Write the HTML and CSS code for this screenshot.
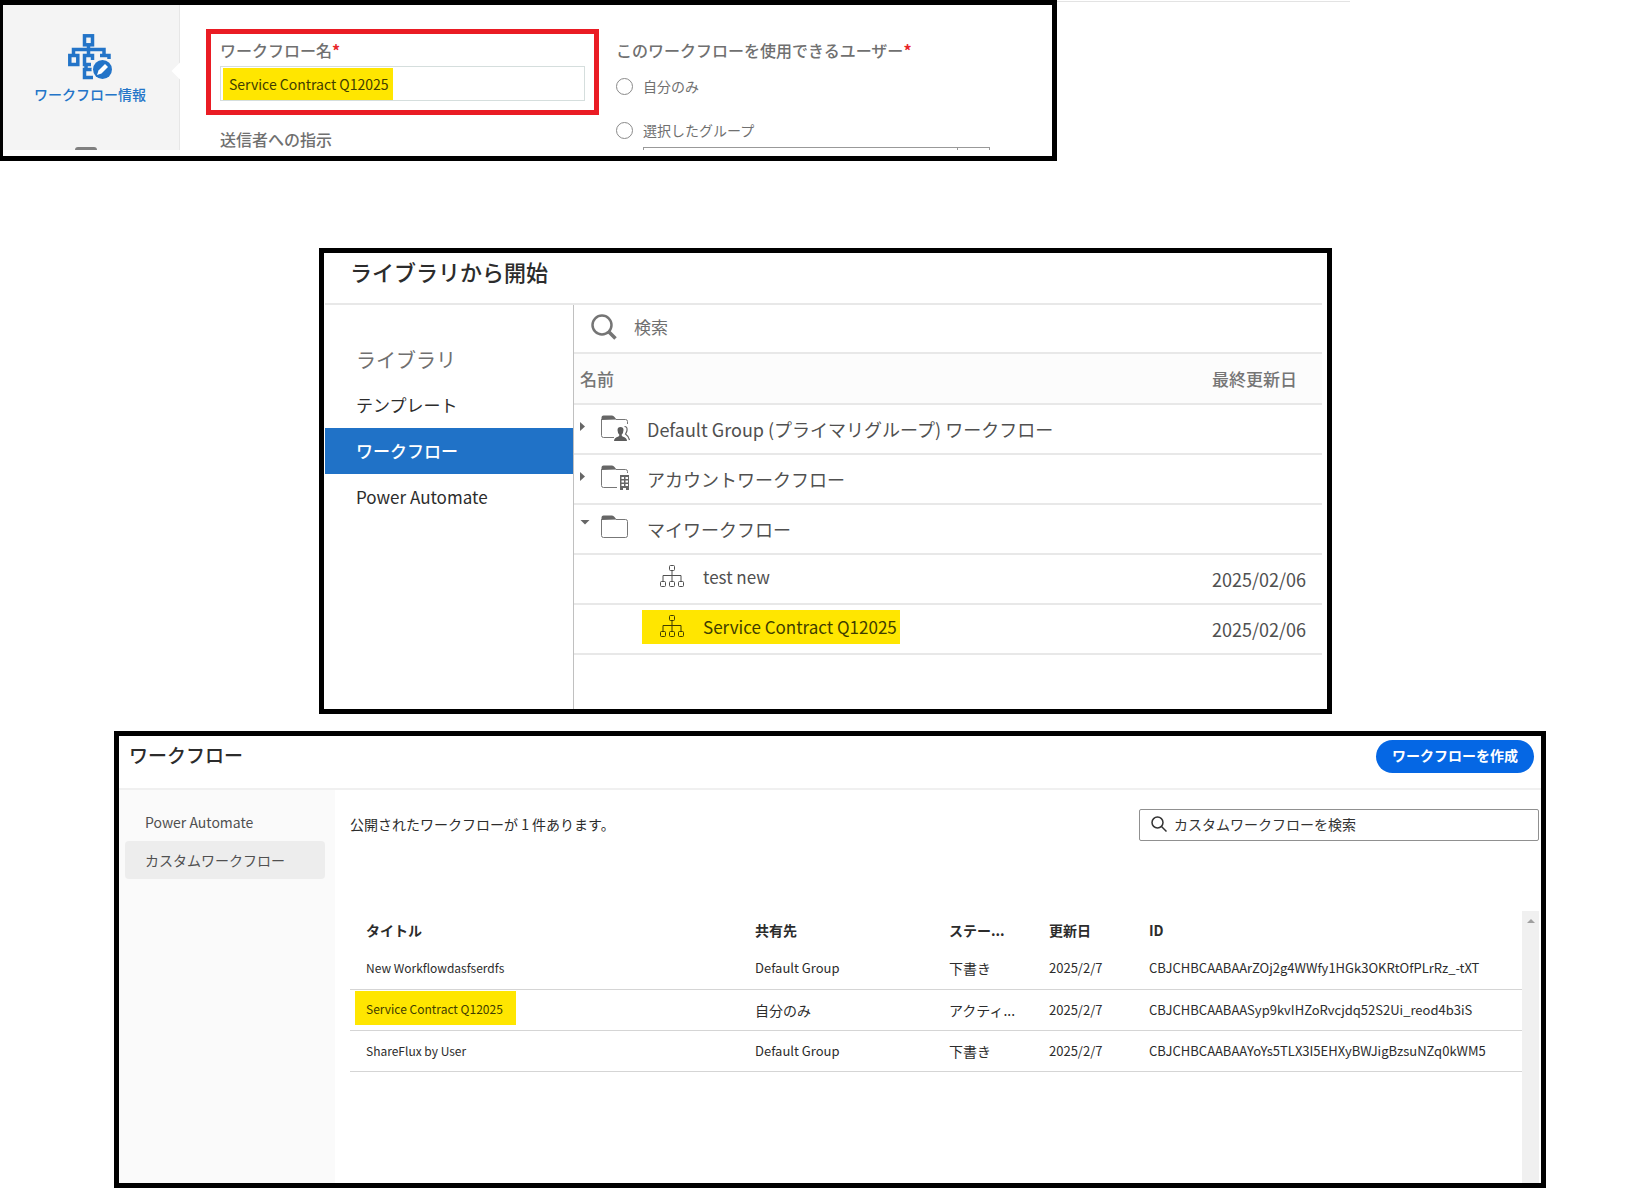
FILE: index.html
```html
<!DOCTYPE html>
<html lang="ja">
<head>
<meta charset="utf-8">
<meta name="viewport" content="width=device-width, initial-scale=1">
<title>ワークフロー</title>
<link rel="stylesheet" href="styles.css">
</head>
<body>
<svg class="defs" aria-hidden="true">
  <symbol id="tree" viewBox="0 0 24 24">
    <g fill="none" stroke="currentColor" stroke-width="1">
      <rect x="9.5" y="0.5" width="5" height="5" rx="1"/>
      <rect x="0.5" y="16.5" width="5" height="5" rx="1"/>
      <rect x="9.5" y="16.5" width="5" height="5" rx="1"/>
      <rect x="18.500" y="16.5" width="5" height="5" rx="1"/>
      <path d="M12 6v10M3 16v-5.500h18V16"/>
    </g>
  </symbol>
  <symbol id="folder-base" viewBox="0 0 30 28">
    <path d="M0.500 5V2.500q0-2 2-2H11q1.500 0 2.500 1.500l2 2.500z" fill="#666"/>
  </symbol>
</svg>

<section class="panel info">
  <div class="info-body">
    <nav class="steps">
      <a class="step" href="#info">
        <svg width="45" height="46" viewBox="0 0 45 46" aria-hidden="true">
          <g fill="none" stroke="#2374c8" stroke-width="3.500">
            <rect x="16.500" y="1.800" width="8" height="9"/>
            <rect x="1.800" y="21.500" width="8" height="9"/>
            <path d="M20.500 11v10M5.500 21v-5.500H36V21M23 30.500h-6.500v-9h8V26M32 21.500h9V25M18 30v6M25 35.500h-8.500v8H25"/>
          </g>
          <circle cx="34.500" cy="35.500" r="11" fill="#f4f4f4"/>
          <circle cx="34.500" cy="35.500" r="9.500" fill="#2374c8"/>
          <path d="M29 41l1.500-4.500 6.500-6.500 3 3-6.500 6.500z" fill="#fff"/>
        </svg>
        <span>ワークフロー情報</span>
      </a>
      <span class="next-step"></span>
    </nav>
    <form class="fields">
      <div class="column">
        <div class="required-box">
          <label class="label" for="name">ワークフロー名<b>*</b></label>
          <input id="name" class="name-input" type="text" value="Service Contract Q12025">
        </div>
        <p class="label instructions">送信者への指示</p>
      </div>
      <fieldset class="users">
        <legend class="label">このワークフローを使用できるユーザー<b>*</b></legend>
        <label class="choice"><input type="radio" name="who">自分のみ</label>
        <label class="choice"><input type="radio" name="who">選択したグループ</label>
        <span class="group-picker"></span>
      </fieldset>
    </form>
  </div>
</section>

<section class="panel library">
  <h1 class="library-title">ライブラリから開始</h1>
  <div class="library-body">
    <nav class="library-nav">
      <h2>ライブラリ</h2>
      <a href="#templates">テンプレート</a>
      <a class="current" href="#workflows">ワークフロー</a>
      <a href="#automate">Power Automate</a>
    </nav>
    <div class="library-main">
      <label class="library-search">
        <svg width="26" height="26" viewBox="0 0 26 26" fill="none" stroke="#757575" aria-hidden="true">
          <circle cx="11" cy="11" r="9.500" stroke-width="2.500"/><path d="M17.500 17.500l7 7" stroke-width="3.500"/>
        </svg>
        <input type="text" placeholder="検索" aria-label="検索">
      </label>
      <table class="tree">
        <thead><tr><th>名前</th><th class="date">最終更新日</th></tr></thead>
        <tbody>
          <tr><td><span class="folder">
            <svg width="10" height="24" viewBox="0 0 10 24"><path d="M0 5l5 4.500-5 4.500z" fill="#666"/></svg>
            <svg width="30" height="28" viewBox="0 0 30 28">
              <use href="#folder-base"/>
              <path d="M0.500 4v16.500q0 2 2 2H13M15 4.500h9.500q2 0 2 2V9" fill="none" stroke="#777"/>
              <path d="M23.500 11.500q3 0 2.500 4-.5 2-1.500 3.500 3 2 4 6" fill="none" stroke="#666" stroke-width="1.200"/>
              <path d="M13 26q0-3.500 4.500-4.500l1-1.500q-2-2-2-5 0-3 3-3t3 3q0 3-2 5l1 1.500q4.500 1 4.500 4.500z" fill="#5c5c5c"/>
            </svg>
            Default Group (プライマリグループ) ワークフロー</span></td><td></td></tr>
          <tr><td><span class="folder">
            <svg width="10" height="24" viewBox="0 0 10 24"><path d="M0 5l5 4.500-5 4.500z" fill="#666"/></svg>
            <svg width="30" height="28" viewBox="0 0 30 28">
              <use href="#folder-base"/>
              <path d="M0.500 4v16.500q0 2 2 2H16M15 4.500h9.500q2 0 2 2V8" fill="none" stroke="#777"/>
              <path d="M19 10h9v15h-3v-2h-3v2h-3z" fill="#666"/>
              <path d="M20.500 12h2.500v2h-2.500zM24.500 12H27v2h-2.500zM20.500 15.500h2.500v2h-2.500zM24.500 15.500H27v2h-2.500zM20.500 19h2.500v2h-2.500zM24.500 19H27v2h-2.500z" fill="#fff"/>
            </svg>
            アカウントワークフロー</span></td><td></td></tr>
          <tr><td><span class="folder">
            <svg width="10" height="24" viewBox="0 0 10 24"><path d="M0.500 3h9L5 7.500z" fill="#666"/></svg>
            <svg width="30" height="28" viewBox="0 0 30 28">
              <use href="#folder-base"/>
              <path d="M0.500 4v16.500q0 2 2 2h22q2 0 2-2v-14q0-2-2-2H15" fill="none" stroke="#777"/>
            </svg>
            マイワークフロー</span></td><td></td></tr>
          <tr class="doc"><td><span class="file"><svg width="24" height="24"><use href="#tree"/></svg>test new</span></td><td class="date">2025/02/06</td></tr>
          <tr class="doc"><td><span class="file marked"><svg width="24" height="24"><use href="#tree"/></svg>Service Contract Q12025</span></td><td class="date">2025/02/06</td></tr>
        </tbody>
      </table>
    </div>
  </div>
</section>

<section class="panel manage">
  <header class="manage-head">
    <h1>ワークフロー</h1>
    <button type="button">ワークフローを作成</button>
  </header>
  <div class="manage-body">
    <nav class="manage-nav">
      <a href="#power">Power Automate</a>
      <a class="current" href="#custom">カスタムワークフロー</a>
    </nav>
    <div class="manage-main">
      <div class="toolbar">
        <p>公開されたワークフローが 1 件あります。</p>
        <label class="search">
          <svg width="16" height="16" viewBox="0 0 16 16" fill="none" stroke="#333" stroke-width="1.500" aria-hidden="true">
            <circle cx="6.500" cy="6.500" r="5.500"/><path d="M10.500 10.500l5 5"/>
          </svg>
          <input type="text" placeholder="カスタムワークフローを検索" aria-label="カスタムワークフローを検索">
        </label>
      </div>
      <div class="list">
        <table>
          <colgroup><col class="c-title"><col class="c-shared"><col class="c-short"><col class="c-short"><col></colgroup>
          <thead><tr><th>タイトル</th><th>共有先</th><th>ステー...</th><th>更新日</th><th>ID</th></tr></thead>
          <tbody>
            <tr><td class="name">New Workflowdasfserdfs</td><td>Default Group</td><td class="ja">下書き</td><td>2025/2/7</td><td>CBJCHBCAABAArZOj2g4WWfy1HGk3OKRtOfPLrRz_-tXT</td></tr>
            <tr><td class="name has-mark"><span class="marked">Service Contract Q12025</span></td><td class="ja">自分のみ</td><td class="ja">アクティ...</td><td>2025/2/7</td><td>CBJCHBCAABAASyp9kvIHZoRvcjdq52S2Ui_reod4b3iS</td></tr>
            <tr><td class="name">ShareFlux by User</td><td>Default Group</td><td class="ja">下書き</td><td>2025/2/7</td><td>CBJCHBCAABAAYoYs5TLX3I5EHXyBWJigBzsuNZq0kWM5</td></tr>
          </tbody>
        </table>
        <div class="scrollbar"><svg width="8" height="4" viewBox="0 0 8 4"><path d="M0 4l4-4 4 4z" fill="#a0a0a0"/></svg></div>
      </div>
    </div>
  </div>
</section>
</body>
</html>
```
FILE: styles.css
```css
* { box-sizing: border-box; }
body {
  margin: 0;
  background: linear-gradient(#e3e3e3, #e3e3e3) left 0 top 1px / 1350px 1px no-repeat #fff;
  color: #2c2c2c;
  font: 14px/20px "Noto Sans CJK JP", sans-serif;
}
h1, h2, p { margin: 0; }
a { color: inherit; text-decoration: none; }
input, button { font: inherit; color: inherit; }
svg { flex: none; }
.defs { position: absolute; width: 0; height: 0; }
.panel { border: 5px solid #000; background: #fff; }
.marked { background: #ffe600; color: #3f3d00; }

/* Workflow information */
.info { margin-right: 584px; border-left-width: 3px; padding-bottom: 6px; }
.info-body { display: flex; height: 145px; overflow: hidden; }
.steps {
  position: relative;
  width: 177px;
  flex: none;
  display: flex;
  flex-direction: column;
  align-items: center;
  justify-content: space-between;
  padding: 29px 2px 0 0;
  background: #f4f4f4;
  border-right: 1px solid #e6e6e6;
}
.steps::after {
  content: "";
  position: absolute;
  right: -7px;
  top: 60px;
  width: 12px;
  height: 12px;
  background: #fff;
  transform: rotate(45deg);
}
.step {
  display: flex;
  flex-direction: column;
  align-items: center;
  gap: 4px;
  color: #2374c8;
  font-weight: 500;
}
.next-step { width: 22px; height: 3px; margin-right: 8px; border-radius: 6px 6px 0 0; background: #808080; }
.fields { flex: 1; display: flex; gap: 17px; padding: 24px 0 0 26px; }
.column { width: 393px; }
.required-box { border: 5px solid #ea1c24; padding: 6px 9px 9px 9px; }
.label { display: block; padding: 0; font-size: 16px; line-height: 20px; font-weight: 500; color: #707070; }
.label b { color: #e8262a; }
.name-input {
  display: block;
  width: 100%;
  height: 35px;
  margin-top: 6px;
  padding: 0 8px;
  border: 1px solid #d5dedd;
  background: linear-gradient(#ffe600, #ffe600) 2px 1px / 170px 32px no-repeat;
  color: #3f3d00;
  font-size: 14px;
}
.instructions { margin: 14px 0 0 14px; }
.users { flex: 1; border: 0; margin: 11px 0 0; padding: 0; min-width: 0; color: #707070; }
.choice { display: flex; align-items: center; gap: 10px; height: 44px; }
.users legend + .choice { margin-top: 4px; }
.choice input {
  appearance: none;
  width: 17px;
  height: 17px;
  margin: 0;
  border: 1px solid #8a8a8a;
  border-radius: 50%;
}
.group-picker {
  display: block;
  width: 347px;
  height: 30px;
  margin: -5px 0 0 27px;
  border: 1px solid #999;
  background: linear-gradient(#999, #999) right 31px top / 1px 100% no-repeat;
}

/* Library */
.library { margin: 87px 309px 0 319px; padding: 0 5px 0 1px; font-size: 17px; line-height: 26px; }
.library-title {
  padding: 2px 0 16px 25px;
  border-bottom: 2px solid #e8e8e8;
  font-size: 22px;
  line-height: 32px;
  font-weight: 500;
}
.library-body { display: flex; }
.library-nav { width: 248px; flex: none; padding-top: 32px; }
.library-nav h2 { padding: 7px 31px 6px; font-size: 20px; line-height: 32px; font-weight: 400; color: #707070; }
.library-nav a { display: block; padding: 10px 31px; }
.library-nav .current { background: #2072c7; color: #fff; font-weight: 500; }
.library-main { flex: 1; border-left: 1px solid #c0c0c0; padding-bottom: 54px; }
.library-search {
  display: flex;
  align-items: center;
  gap: 17px;
  height: 49px;
  padding: 0 0 4px 17px;
  border-bottom: 2px solid #e8e8e8;
}
.library-search input { flex: 1; border: 0; padding: 0; background: none; outline: 0; }
.library-search input::placeholder { color: #707070; opacity: 1; }
.tree { width: 100%; border-collapse: collapse; color: #505050; }
.tree th { height: 50px; padding: 0 0 0 6px; text-align: left; font-weight: 500; color: #757575; background: #fcfcfc; border-bottom: 2px solid #e8e8e8; }
.tree td { height: 50px; padding: 0; border-bottom: 2px solid #e8e8e8; }
.tree .date { width: 110px; padding: 0; }
.tree td.date { font-size: 18px; }
.folder { display: flex; align-items: center; padding-left: 6px; font-size: 18px; }
.folder svg + svg { margin: 0 16px 0 11px; }
.doc td:first-child { padding: 0 0 4px 68px; }
.file { display: inline-flex; align-items: center; vertical-align: middle; height: 34px; padding: 0 3px 0 18px; gap: 19px; }

/* Workflow management */
.manage { margin: 17px 95px 0 114px; }
.manage-head {
  display: flex;
  justify-content: space-between;
  align-items: flex-start;
  padding: 4px 7px 15px 10px;
  border-bottom: 2px solid #f0f0f0;
}
.manage-head h1 { font-size: 19px; line-height: 30px; font-weight: 500; }
.manage-head button {
  height: 33px;
  padding: 0 16px 4px;
  border: 0;
  border-radius: 17px;
  background: #0567e4;
  color: #fff;
  font-weight: 700;
}
.manage-body { display: flex; }
.manage-nav { width: 216px; flex: none; padding: 13px 10px 0 6px; background: #fafafa; color: #505050; }
.manage-nav a { display: block; padding: 9px 20px; border-radius: 4px; }
.manage-nav .current { background: #ededed; }
.manage-main { flex: 1; min-width: 0; padding: 19px 2px 0 15px; }
.toolbar { display: flex; justify-content: space-between; align-items: center; }
.toolbar p { padding-bottom: 2px; }
.search {
  display: flex;
  align-items: center;
  gap: 7px;
  width: 400px;
  height: 32px;
  padding: 0 11px 2px;
  border: 1px solid #909090;
  border-radius: 2px;
}
.search input { flex: 1; min-width: 0; border: 0; padding: 0; outline: 0; background: none; }
.search input::placeholder { color: #333; opacity: 1; }
.list { display: flex; margin-top: 70px; height: 272px; }
.list table { flex: 1; min-width: 0; align-self: flex-start; table-layout: fixed; border-collapse: collapse; }
.c-title { width: 389px; }
.c-shared { width: 194px; }
.c-short { width: 100px; }
.list th, .list td {
  height: 41px;
  padding: 0 12px 0 16px;
  overflow: hidden;
  text-align: left;
  text-overflow: ellipsis;
  white-space: nowrap;
}
.list th { height: 37px; font-weight: 700; }
.list td { font-size: 13px; border-bottom: 1px solid #d5d5d5; }
.list td.name { font-size: 12px; }
.list td.ja { font-size: 14px; }
.list td.has-mark { padding: 0 0 4px 5px; }
.has-mark .marked { display: inline-block; padding: 8px 13px 6px 11px; vertical-align: middle; }
.scrollbar { width: 17px; flex: none; padding-top: 8px; background: #f0f0f0; }
.scrollbar svg { display: block; margin: 0 auto; }
```
